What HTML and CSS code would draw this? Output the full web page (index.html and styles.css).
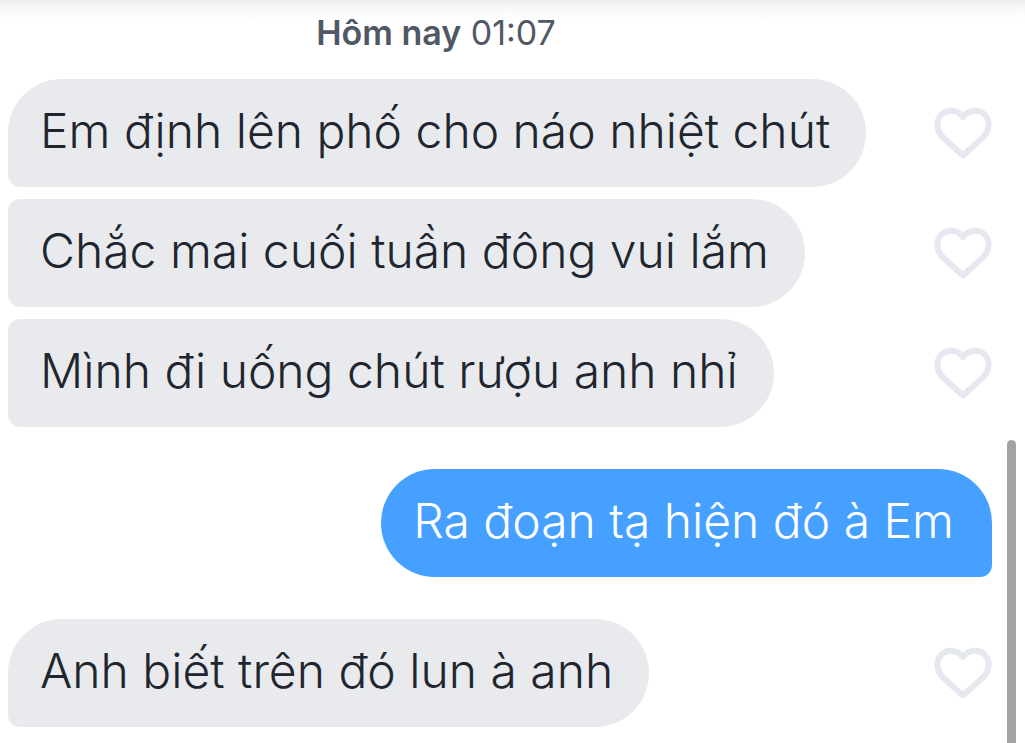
FILE: index.html
```html
<!DOCTYPE html>
<html lang="vi">
<head>
<meta charset="utf-8">
<title>Tin nhắn</title>
<link rel="stylesheet" href="styles.css">
</head>
<body>
<svg class="defs" aria-hidden="true">
  <symbol id="heart" viewBox="0 0 58 54">
    <path d="M29 49.500 L9 31.500 C1.500 23.500 2 13 8 8 C14 2.800 24 4 29 11 C34 4 44 2.800 50 8 C56 13 56.500 23.500 49 31.500 Z" fill="none" stroke="#e6e8ef" stroke-width="6" stroke-linejoin="round"/>
  </symbol>
</svg>
<main class="chat">
  <time class="stamp"><b>Hôm nay</b> 01:07</time>
  <section class="group">
    <div class="row first"><p class="bubble">Em định lên phố cho náo nhiệt chút</p><button class="like" aria-label="Thích"><svg class="heart"><use href="#heart"/></svg></button></div>
    <div class="row"><p class="bubble">Chắc mai cuối tuần đông vui lắm</p><button class="like" aria-label="Thích"><svg class="heart"><use href="#heart"/></svg></button></div>
    <div class="row"><p class="bubble">Mình đi uống chút rượu anh nhỉ</p><button class="like" aria-label="Thích"><svg class="heart"><use href="#heart"/></svg></button></div>
  </section>
  <section class="group">
    <div class="row sent"><p class="bubble">Ra đoạn tạ hiện đó à Em</p></div>
  </section>
  <section class="group">
    <div class="row first"><p class="bubble">Anh biết trên đó lun à anh</p><button class="like" aria-label="Thích"><svg class="heart"><use href="#heart"/></svg></button></div>
  </section>
</main>
<div class="scrollbar" aria-hidden="true"></div>
</body>
</html>
```
FILE: styles.css
```css
* { box-sizing: border-box; }
html { overflow: hidden; }
body { margin: 0; background: #fff; color: #21262e; font-family: Inter, "Noto Sans", sans-serif; }
.defs { position: absolute; width: 0; height: 0; }
.chat {
  padding: 14px 33px 16px 8px;
  background: linear-gradient(#ececec, #fafafa 10px, #fff 24px);
}
.stamp { display: block; width: max-content; margin: 0 auto 27px; padding-right: 128px; font-size: 34px; line-height: 38px; color: #505866; }
.stamp b { font-weight: 600; }
.group { display: flex; flex-direction: column; gap: 12px; margin-bottom: 42px; }
.group:last-child { margin-bottom: 0; }
.row { display: flex; align-items: center; justify-content: space-between; }
.bubble { margin: 0; padding: 22px 36px 26px 32px; font-size: 48px; font-weight: 300; line-height: 60px; white-space: nowrap; background: #e9eaee; border-radius: 12px 54px 54px 12px; }
.first .bubble { border-top-left-radius: 54px; }
.sent { justify-content: flex-end; }
.sent .bubble { padding-right: 38px; color: #fff; background: #46a0ff; border-radius: 54px 54px 12px 54px; }
.like { padding: 0; border: 0; background: none; }
.heart { display: block; width: 58px; height: 54px; }
.scrollbar { position: fixed; right: 9px; top: 440px; bottom: -8px; width: 9px; border-radius: 5px; background: #a3a3a3; }
```
